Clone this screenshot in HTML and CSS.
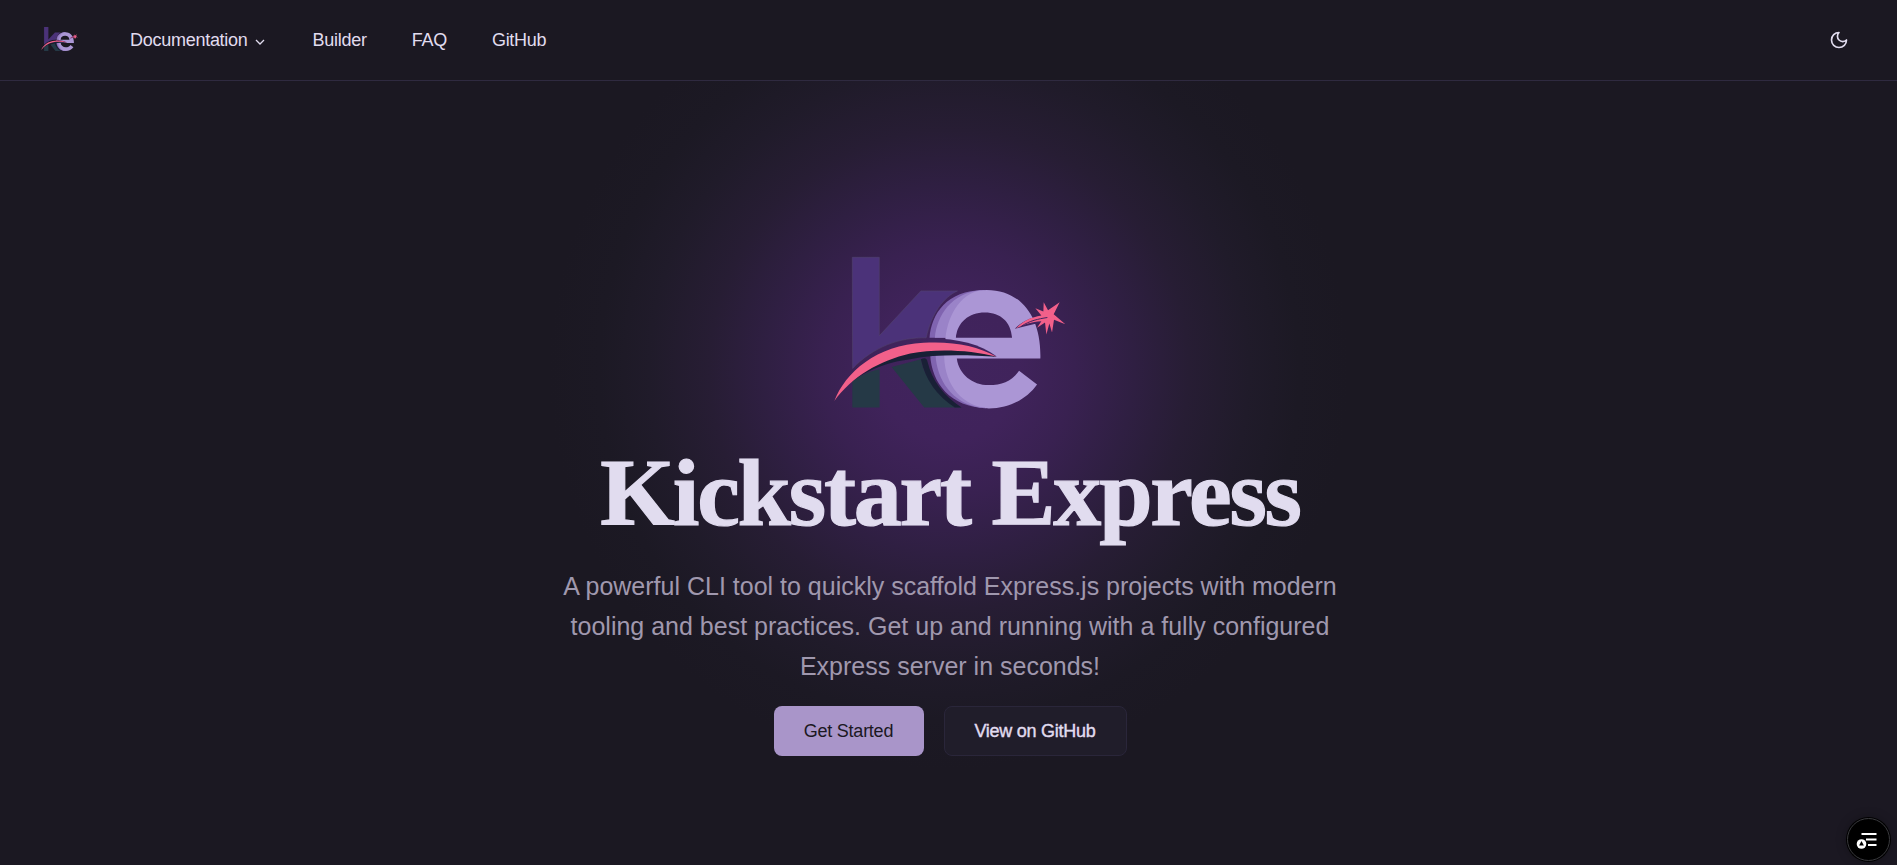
FILE: index.html
```
<!DOCTYPE html>
<html lang="en">
<head>
<meta charset="utf-8">
<title>Kickstart Express</title>
<link rel="stylesheet" href="styles.css">
</head>
<body>
<svg class="defs" aria-hidden="true">
  <symbol id="logo" viewBox="38 46 700 464">
    <path fill="#4b3279" stroke="#55486f" stroke-width="1.5" d="M96 52H177V288L302 153H412C370 172 334 220 318 294C240 292 160 320 97 386Z"/>
    <path fill="#253946" d="M96 424Q135 398 178 388V503H96ZM214 382L302 358Q316 440 424 503H312Z"/>
    <path fill="#192036" d="M302 358Q320 350 322 366Q342 450 424 503H404Q322 450 302 358Z"/>
    <path fill="#8064b0" d="M328 294C334 220 380 152 490 150L520 165C440 170 412 240 407 294ZM330 345C334 430 390 502 500 506C440 480 404 420 408 350Z"/>
    <path fill="#9a83c8" d="M344 294C350 225 395 160 480 151L500 158C420 180 385 230 380 294ZM346 345C350 420 395 490 480 504L500 500C420 470 384 410 382 345Z"/>
    <path fill="#ab96d5" fill-rule="evenodd" d="M376 294C384 222 425 150 500 150C602 150 664 230 661 356H410C416 403 456 436 506 436C546 436 575 424 597 393L651 434C620 478 568 506 506 506C430 500 374 440 372 350ZM407 294H576C572 246 542 218 494 218C446 218 411 248 407 294Z"/>
    <path fill="#41245f" d="M324 296C400 294 480 310 530 350L420 340L320 325Z"/>
    <path fill="#192036" d="M42 486C76 420 170 370 270 358C350 342 450 346 530 351C430 322 300 316 210 346C130 370 80 410 42 486Z"/>
    <path fill="#f2608a" d="M42 484C75 398 170 315 310 309C400 304 470 318 528 350C450 330 345 326 270 341C178 362 95 410 42 484Z"/>
    <path fill="#41245f" d="M584 267C610 240 640 229 680 226L676 246L640 253Z"/>
    <path fill="#f2608a" d="M588 266C608 243 634 232 664 227L646 205L670 215L671 187L684 211L719 187L701 223L736 253L702 240L696 278L688 251L679 284L675 248L651 264L664 244C634 246 612 253 588 266Z"/>
    <path fill="none" stroke="#41245f" stroke-width="3" d="M604 259C628 243 655 237 682 233"/>
  </symbol>
</svg>
<div class="page">
  <header class="header">
    <svg class="brand" role="img" aria-label="Kickstart Express"><use href="#logo"/></svg>
    <nav class="nav">
      <a class="nav-link">Documentation<svg class="chevron" viewBox="0 0 12 12"><path d="M2 4l4 4 4-4"/></svg></a>
      <a class="nav-link">Builder</a>
      <a class="nav-link">FAQ</a>
      <a class="nav-link">GitHub</a>
    </nav>
    <svg class="moon" viewBox="0 0 24 24"><path d="M12 3a6 6 0 0 0 9 9 9 9 0 1 1-9-9Z"/></svg>
  </header>
  <main class="hero">
    <svg class="hero-logo"><use href="#logo"/></svg>
    <h1 class="title">Kickstart Express</h1>
    <p class="lead">A powerful CLI tool to quickly scaffold Express.js projects with modern<br>tooling and best practices. Get up and running with a fully configured<br>Express server in seconds!</p>
    <div class="actions">
      <a class="btn btn-primary">Get Started</a>
      <a class="btn btn-secondary">View on GitHub</a>
    </div>
  </main>
  <button class="fab" aria-label="Page tools">
    <svg viewBox="0 0 41 41"><path class="fab-lines" d="M13.5 15h15M18 20.5h10.500M20 26h8.500"/><circle cx="13.500" cy="25" r="4.800"/><path class="fab-mark" d="M13.500 22l2.400 4.500h-4.800z"/></svg>
  </button>
</div>
</body>
</html>
```
FILE: styles.css
```
* { box-sizing: border-box; }
body { margin: 0; background: #1b1822; font-family: "Liberation Sans", Arial, sans-serif; color: #e1dcef; }
.defs { position: absolute; width: 0; height: 0; }
.page { height: 865px; overflow: hidden; display: flex; flex-direction: column;
  background: radial-gradient(circle 400px at 949px 370px, #41245e 0, #40235b 70px, #392151 125px, #2f1f42 185px, #271d34 240px, #201b2a 300px, #1c1924 350px, #1b1822 400px); }
.header { height: 81px; flex: none; display: flex; align-items: center; padding: 0 48px 0 41px; background: #1b1822; border-bottom: 1px solid #2f2a40; }
.brand { width: 37px; height: 26px; margin-top: -2px; }
.nav { display: flex; gap: 45px; margin-left: 52px; flex: 1; }
.nav-link { display: flex; align-items: center; font-size: 18px; line-height: 24px; letter-spacing: -0.27px; }
.chevron { width: 12px; height: 12px; margin-left: 6px; margin-right: 2px; margin-top: 3px; fill: none; stroke: #e1dcef; stroke-width: 1.3; }
.moon { width: 20px; height: 20px; fill: none; stroke: #e1dcef; stroke-width: 2; stroke-linejoin: round; }
.hero { display: flex; flex-direction: column; align-items: center; padding: 174px 0 0 3px; }
.hero-logo { width: 233px; height: 155px; margin-left: -1px; }
.title { margin: 28px 0 0; font: bold 96px/110px "Liberation Serif", serif; letter-spacing: -2.2px; white-space: nowrap; -webkit-text-stroke: 1.2px #e1dcef; }
.lead { margin: 18px 0 0; font-size: 25px; line-height: 40px; text-align: center; color: #a098ae; white-space: nowrap; }
.actions { display: flex; gap: 20px; margin-top: 20px; }
.btn { height: 50px; border-radius: 8px; display: flex; align-items: center; justify-content: center; font-size: 18px; letter-spacing: -0.25px; }
.btn-primary { width: 150px; background: #a995c9; color: #1b1822; }
.btn-secondary { width: 183px; background: #201d2a; border: 1px solid #2a263a; -webkit-text-stroke: 0.4px #e1dcef; }
.fab { position: absolute; left: 1847px; top: 818px; width: 43px; height: 43px; padding: 0; border-radius: 50%; border: 1px solid #3a3a3e; background: #000; box-shadow: 0 0 0 1px #000, 0 0 12px rgba(0,0,0,.3); }
.fab svg { display: block; width: 41px; height: 41px; fill: #fff; }
.fab-lines { stroke: #fff; stroke-width: 2; }
.fab-mark { fill: #000; }
```
